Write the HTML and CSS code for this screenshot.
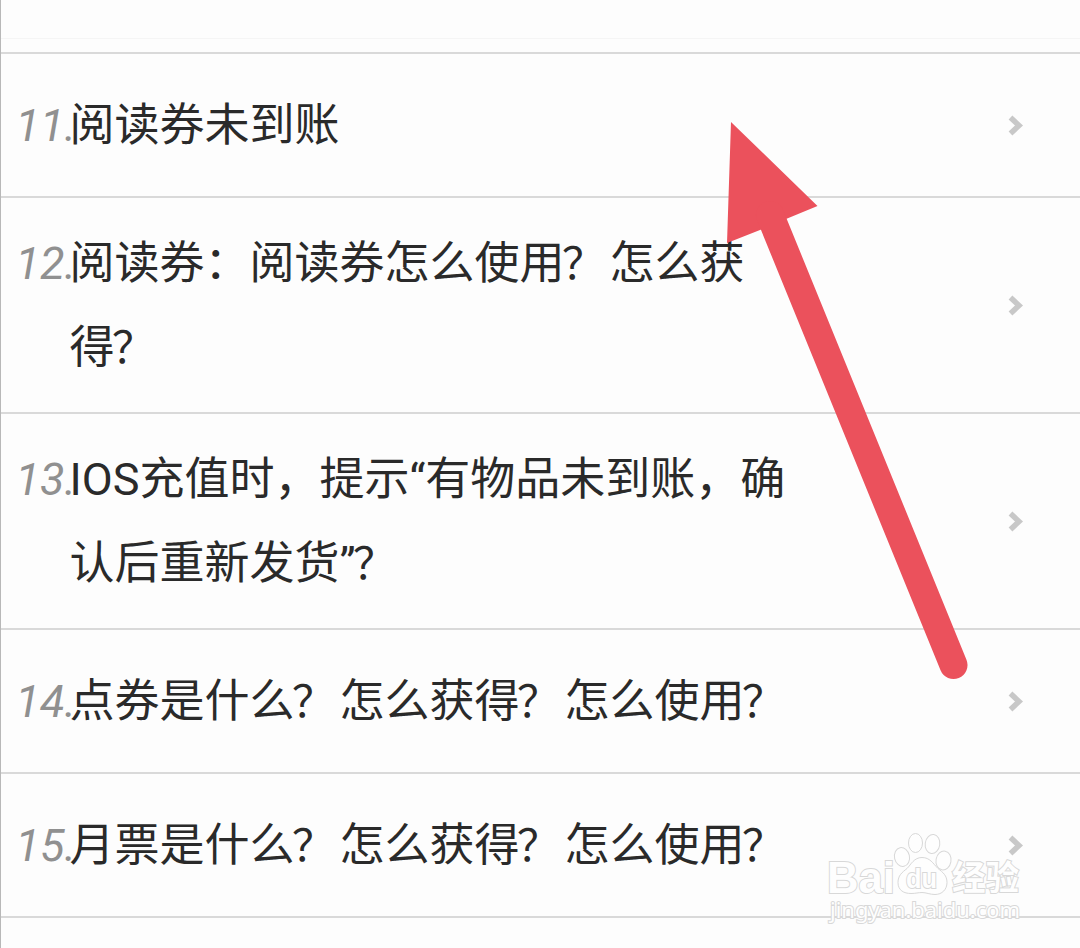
FILE: index.html
```html
<!DOCTYPE html>
<html lang="zh-CN">
<head>
<meta charset="utf-8">
<title>常见问题</title>
<link rel="stylesheet" href="styles.css">
</head>
<body>
<main class="page">
  <div class="previous"></div>
  <ul class="list">
    <li class="row"><div class="entry"><span class="num">11.</span><span class="title">阅读券未到账</span></div><svg class="chevron" viewBox="0 0 18 24"><path d="M3.500 3.500 12 11.500 3.500 19.500"/></svg></li>
    <li class="row"><div class="entry"><span class="num">12.</span><span class="title">阅读券：阅读券怎么使用<span class="q">？</span>怎么获<br>得<span class="q">？</span></span></div><svg class="chevron" viewBox="0 0 18 24"><path d="M3.500 3.500 12 11.500 3.500 19.500"/></svg></li>
    <li class="row"><div class="entry"><span class="num">13.</span><span class="title">IOS充值时，提示“有物品未到账，确<br>认后重新发货”<span class="q">？</span></span></div><svg class="chevron" viewBox="0 0 18 24"><path d="M3.500 3.500 12 11.500 3.500 19.500"/></svg></li>
    <li class="row"><div class="entry"><span class="num">14.</span><span class="title">点券是什么<span class="q">？</span>怎么获得<span class="q">？</span>怎么使用<span class="q">？</span></span></div><svg class="chevron" viewBox="0 0 18 24"><path d="M3.500 3.500 12 11.500 3.500 19.500"/></svg></li>
    <li class="row"><div class="entry"><span class="num">15.</span><span class="title">月票是什么<span class="q">？</span>怎么获得<span class="q">？</span>怎么使用<span class="q">？</span></span></div><svg class="chevron" viewBox="0 0 18 24"><path d="M3.500 3.500 12 11.500 3.500 19.500"/></svg></li>
  </ul>
  <svg class="arrow" viewBox="0 0 260 570">
    <path class="arrow-head" d="M11 2 97.5 86 66 99 40 110 7 123Z"/>
    <path class="arrow-shaft" d="M50 95 233.5 545"/>
  </svg>
  <svg class="watermark" viewBox="0 0 210 100">
    <text class="mark-name" x="7" y="62.500" textLength="68" lengthAdjust="spacingAndGlyphs">Bai</text>
    <ellipse cx="82" cy="27" rx="7.5" ry="9.5" transform="rotate(-12 82 27)"/>
    <ellipse cx="95.5" cy="13" rx="7" ry="9.5"/>
    <ellipse cx="112.5" cy="14" rx="7.3" ry="9.5" transform="rotate(8 112.5 14)"/>
    <ellipse cx="123.5" cy="30.5" rx="7.5" ry="9.5" transform="rotate(10 123.5 30.5)"/>
    <path d="M102 27.500c-8 0-11 7-15 11-5 4-9 7-9 14 0 8 6 11 13 11 5 0 7-1 11-1s8 2 13 2c7 0 12-5 12-12s-4-10-9-14c-5-5-8-11-16-11Z"/>
    <text class="mark-du" x="86" y="58" textLength="31" lengthAdjust="spacingAndGlyphs">du</text>
    <text class="mark-cn" x="132" y="60" textLength="67" lengthAdjust="spacingAndGlyphs">经验</text>
    <text class="mark-url" x="10" y="88" textLength="190" lengthAdjust="spacingAndGlyphs">jingyan.baidu.com</text>
  </svg>
</main>
</body>
</html>
```
FILE: styles.css
```css
* { box-sizing: border-box; }
body { margin: 0; background: #fdfdfd; overflow: hidden; }
.page {
  position: relative;
  height: 948px;
  border-left: 1px solid #b8b8b8;
  font-family: Roboto, "Noto Sans CJK SC", sans-serif;
  font-size: 45px;
  line-height: 84px;
  color: #2a2a2a;
}
.previous { height: 39px; border-bottom: 1px solid #f5f5f5; }
.list { list-style: none; margin: 13px 0 0; padding: 0; border-top: 2px solid #d9d9d9; }
.row {
  display: flex;
  align-items: center;
  height: 144px;
  padding: 2px 55px 0 14.5px;
  border-bottom: 2px solid #d9d9d9;
}
.row:has(br) { height: 216px; }
.entry { flex: 1; display: flex; align-items: baseline; }
.num { width: 54px; flex: none; color: #909090; font-style: italic; white-space: nowrap; }
.title { flex: 1; white-space: nowrap; }
.q { display: inline-block; width: 45px; height: 84px; font-size: 43px; line-height: 84px; text-indent: -2.5px; vertical-align: baseline; }
.chevron { width: 18px; height: 24px; flex: none; fill: none; stroke: #c8c8c8; stroke-width: 5.5; }
.arrow { position: absolute; left: 719px; top: 120px; width: 260px; height: 570px; }
.arrow-head { fill: #eb515c; }
.arrow-shaft { fill: none; stroke: #eb515c; stroke-width: 28; stroke-linecap: round; }
.watermark {
  position: absolute;
  left: 819px;
  top: 830px;
  width: 210px;
  height: 100px;
  fill: #fefefe;
  stroke: #d8d8d8;
  stroke-width: 1;
  line-height: 1;
}
.watermark text { paint-order: stroke; stroke-width: 2; }
.mark-name { font: bold 45px "Liberation Sans", sans-serif; }
.mark-du { font: bold 27px "Liberation Sans", sans-serif; }
.mark-cn { font: bold 34px "Noto Sans CJK SC", sans-serif; }
.mark-url { font: 22px "Noto Sans", sans-serif; }
```
